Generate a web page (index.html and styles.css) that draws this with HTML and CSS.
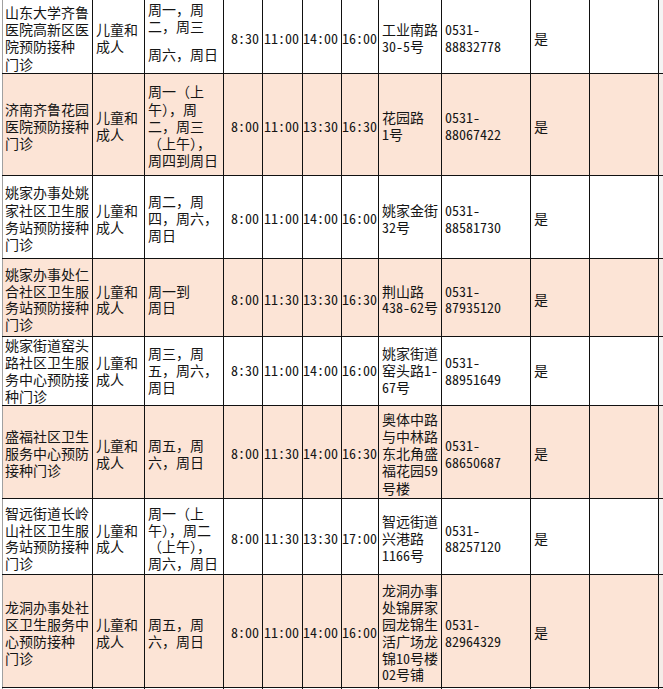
FILE: index.html
```html
<!DOCTYPE html>
<html lang="zh-CN">
<head>
<meta charset="utf-8">
<title>预防接种门诊</title>
<link rel="stylesheet" href="styles.css">
</head>
<body>
<table class="sheet">
  <colgroup>
    <col class="w-name"><col class="w-who"><col class="w-day">
    <col class="w-t1"><col class="w-t2"><col class="w-t3"><col class="w-t4">
    <col class="w-addr"><col class="w-tel"><col class="w-yes"><col class="w-e1"><col class="w-e2">
  </colgroup>
  <tbody>
    <tr class="r1">
      <td>山东大学齐鲁<br>医院高新区医<br>院预防接种<br>门诊</td>
      <td>儿童和<br>成人</td>
      <td class="top"><div>周一，周</div><div>二，周三</div><div class="gap">周六，周日</div></td>
      <td class="t">8:30</td><td class="t">11:00</td><td class="t">14:00</td><td class="t">16:00</td>
      <td>工业南路<br><span class="n">30-5</span>号</td>
      <td class="n">0531-<br>88832778</td>
      <td>是</td><td></td><td></td>
    </tr>
    <tr class="r2 p">
      <td>济南齐鲁花园<br>医院预防接种<br>门诊</td>
      <td>儿童和<br>成人</td>
      <td>周一（上<br>午），周<br>二，周三<br>（上午），<br>周四到周日</td>
      <td class="t">8:00</td><td class="t">11:00</td><td class="t">13:30</td><td class="t">16:30</td>
      <td>花园路<br><span class="n">1</span>号</td>
      <td class="n">0531-<br>88067422</td>
      <td>是</td><td></td><td></td>
    </tr>
    <tr class="r3">
      <td>姚家办事处姚<br>家社区卫生服<br>务站预防接种<br>门诊</td>
      <td>儿童和<br>成人</td>
      <td>周二，周<br>四，周六，<br>周日</td>
      <td class="t">8:00</td><td class="t">11:00</td><td class="t">14:00</td><td class="t">16:00</td>
      <td>姚家金街<br><span class="n">32</span>号</td>
      <td class="n">0531-<br>88581730</td>
      <td>是</td><td></td><td></td>
    </tr>
    <tr class="r4 p">
      <td>姚家办事处仁<br>合社区卫生服<br>务站预防接种<br>门诊</td>
      <td>儿童和<br>成人</td>
      <td>周一到<br>周日</td>
      <td class="t">8:00</td><td class="t">11:30</td><td class="t">13:30</td><td class="t">16:30</td>
      <td>荆山路<br><span class="n">438-62</span>号</td>
      <td class="n">0531-<br>87935120</td>
      <td>是</td><td></td><td></td>
    </tr>
    <tr class="r5">
      <td>姚家街道窑头<br>路社区卫生服<br>务中心预防接<br>种门诊</td>
      <td>儿童和<br>成人</td>
      <td>周三，周<br>五，周六，<br>周日</td>
      <td class="t">8:30</td><td class="t">11:00</td><td class="t">14:00</td><td class="t">16:00</td>
      <td>姚家街道<br>窑头路<span class="n">1-</span><br><span class="n">67</span>号</td>
      <td class="n">0531-<br>88951649</td>
      <td>是</td><td></td><td></td>
    </tr>
    <tr class="r6 p">
      <td>盛福社区卫生<br>服务中心预防<br>接种门诊</td>
      <td>儿童和<br>成人</td>
      <td>周五，周<br>六，周日</td>
      <td class="t">8:00</td><td class="t">11:30</td><td class="t">14:00</td><td class="t">16:30</td>
      <td>奥体中路<br>与中林路<br>东北角盛<br>福花园<span class="n">59</span><br>号楼</td>
      <td class="n">0531-<br>68650687</td>
      <td>是</td><td></td><td></td>
    </tr>
    <tr class="r7">
      <td>智远街道长岭<br>山社区卫生服<br>务站预防接种<br>门诊</td>
      <td>儿童和<br>成人</td>
      <td>周一（上<br>午），周二<br>（上午），<br>周六，周日</td>
      <td class="t">8:00</td><td class="t">11:30</td><td class="t">13:30</td><td class="t">17:00</td>
      <td>智远街道<br>兴港路<br><span class="n">1166</span>号</td>
      <td class="n">0531-<br>88257120</td>
      <td>是</td><td></td><td></td>
    </tr>
    <tr class="r8 p">
      <td>龙洞办事处社<br>区卫生服务中<br>心预防接种<br>门诊</td>
      <td>儿童和<br>成人</td>
      <td>周五，周<br>六，周日</td>
      <td class="t">8:00</td><td class="t">11:00</td><td class="t">14:00</td><td class="t">16:00</td>
      <td>龙洞办事<br>处锦屏家<br>园龙锦生<br>活广场龙<br>锦<span class="n">10</span>号楼<br><span class="n">02</span>号铺</td>
      <td class="n">0531-<br>82964329</td>
      <td>是</td><td></td><td></td>
    </tr>
    <tr class="r9">
      <td></td><td></td><td></td><td></td><td></td><td></td><td></td><td></td><td></td><td></td><td></td><td></td>
    </tr>
  </tbody>
</table>
</body>
</html>
```

FILE: styles.css
```css
html, body {
  margin: 0;
  padding: 0;
  background: #ffffff;
  overflow: hidden;
}

.sheet {
  border-collapse: collapse;
  table-layout: fixed;
  width: 687px;
  margin: -1px 0 0 2px;
  font-family: "Noto Sans CJK SC", "Noto Sans CJK JP", sans-serif;
  font-weight: 400;
  font-size: 14px;
  line-height: 17.2px;
  color: #151515;
}

.w-name { width: 90px; }
.w-who  { width: 52px; }
.w-day  { width: 79px; }
.w-t1   { width: 39px; }
.w-t2   { width: 40px; }
.w-t3   { width: 39px; }
.w-t4   { width: 37px; }
.w-addr { width: 63px; }
.w-tel  { width: 89px; }
.w-yes  { width: 59px; }
.w-e1   { width: 69px; }
.w-e2   { width: 31px; }

.sheet td {
  border: 1px solid #111111;
  padding: 4px 0 0 3px;
  vertical-align: middle;
  white-space: nowrap;
  overflow: hidden;
  background: #ffffff;
}

.sheet td:first-child {
  border-left-color: #a0a0a0;
  padding-left: 2px;
}

.sheet td:last-child {
  border-left-color: #111111;
  background: #f4f4f4;
}

.sheet tr.p td {
  background: #fce4d6;
}

.sheet tr.p td:last-child {
  background: #f4ece8;
}

.sheet td.t {
  text-align: right;
  padding-left: 0;
  padding-right: 3px;
  font-feature-settings: "hwid" 1;
}

.n {
  font-feature-settings: "hwid" 1;
}

.sheet td.top {
  vertical-align: top;
  padding-top: 1px;
}

.gap {
  margin-top: 11px;
}

.r1 { height: 72px; }
.r2 { height: 102px; }
.r3 { height: 83px; }
.r4 { height: 78px; }
.r5 { height: 69px; }
.r6 { height: 93px; }
.r7 { height: 76px; }
.r8 { height: 113px; }
.r9 { height: 30px; }

.r4 td, .r7 td, .r8 td { line-height: 16.8px; }
.r5 td { line-height: 17px; padding-top: 0; }
```
